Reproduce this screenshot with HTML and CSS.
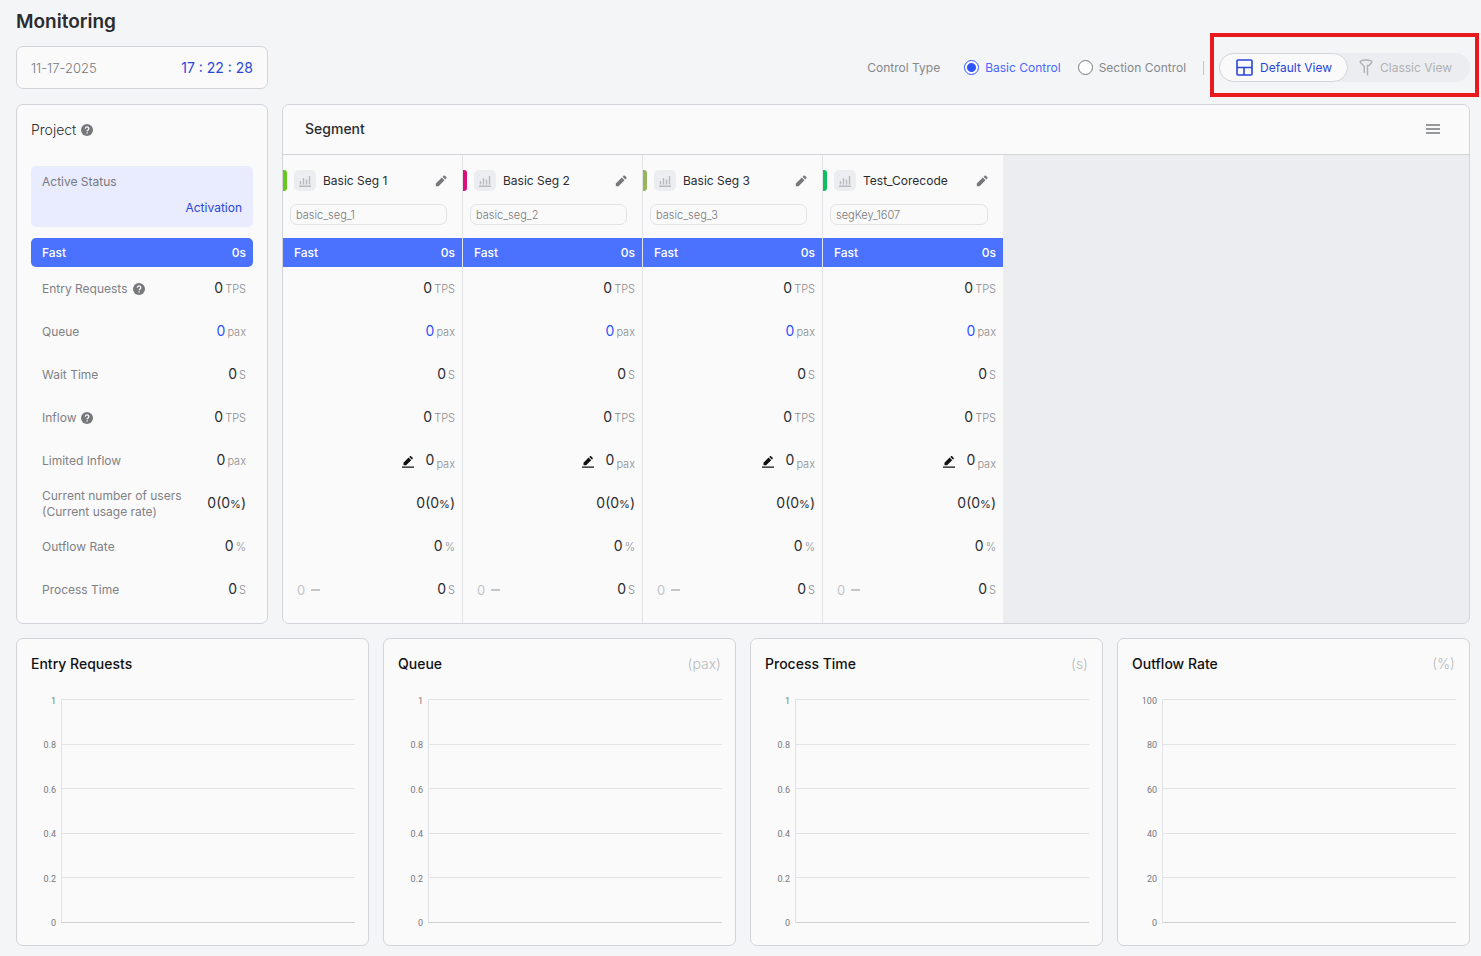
FILE: index.html
```html
<!DOCTYPE html>
<html lang="en">
<head>
    <meta charset="UTF-8">
    <meta name="viewport" content="width=device-width, initial-scale=1.0">
    <title>Monitoring</title>
    <link rel="stylesheet" href="styles.css">
</head>
<body>
    <svg class="sprite" aria-hidden="true">
        <symbol id="icon-help" viewBox="0 0 12 12">
            <circle cx="6" cy="6" r="6" fill="#77787b"/>
            <path d="M4.300 4.700a1.750 1.750 0 1 1 2.700 1.400c-.6.400-.9.700-.9 1.200" fill="none" stroke="#fff" stroke-width="1.200"/>
            <circle cx="6.100" cy="9" r=".75" fill="#fff"/>
        </symbol>
        <symbol id="icon-chart" viewBox="0 0 12 12">
            <path d="M1.500 9.500V6M4.500 9.500V3M7.500 9.500V4.500M10.500 9.500V1M0 11.200h12" fill="none" stroke="#b9babd" stroke-width="1.400"/>
        </symbol>
        <symbol id="icon-pencil" viewBox="0 0 12 12">
            <path d="M.8 8.500 6.800 2.500l2.700 2.700-6 6H.8zM7.600 1.700l1-1c.4-.4.9-.4 1.300 0l1.400 1.400c.4.4.4.9 0 1.300l-1 1z" fill="#77787b"/>
        </symbol>
        <symbol id="icon-edit" viewBox="0 0 12 12">
            <path d="M1.500 6.700 6.600 1.600l2.600 2.600L4.100 9.300H1.500zM7.300 1l.7-.7c.3-.3.8-.3 1.100 0l1.500 1.500c.3.3.3.8 0 1.100l-.7.7zM0 10.500h12v1.200H0z" fill="#111"/>
        </symbol>
    </svg>

    <h1 class="page-title">Monitoring</h1>

    <div class="toolbar">
        <div class="card clock">
            <span class="clock-date">11-17-2025</span>
            <span class="clock-time">17 : 22 : 28</span>
        </div>
        <fieldset class="control-type">
            <legend class="control-legend">Control Type</legend>
            <label class="radio"><input type="radio" name="control" value="basic" checked><span>Basic Control</span></label>
            <label class="radio"><input type="radio" name="control" value="section"><span>Section Control</span></label>
        </fieldset>
        <div class="view-switch">
            <button type="button" class="view-button active">
                <svg width="17" height="17" viewBox="0 0 17 17" fill="none" stroke="#2a46d8" stroke-width="1.600"><rect x="1" y="1" width="15" height="15" rx="1"/><path d="M1 8.500h15M8 8.500v7.500"/></svg>
                Default View
            </button>
            <button type="button" class="view-button">
                <svg width="14" height="17" viewBox="0 0 14 17" fill="none" stroke="#b0b1b5" stroke-width="1.400"><path d="M5.300 14V7.500L1.200 3.200C.9 1.800 3 1 7 1s6.100.8 5.800 2.200L10 6.500H8.500V16.500"/></svg>
                Classic View
            </button>
        </div>
    </div>

    <div class="overview">
        <section class="card project">
            <h2 class="project-title">Project <svg class="icon"><use href="#icon-help"/></svg></h2>
            <div class="status">
                <span>Active Status</span>
                <span class="status-value">Activation</span>
            </div>
            <div class="speed"><span>Fast</span><span>0s</span></div>
            <dl class="metrics">
                <div class="metric"><dt>Entry Requests <svg class="icon"><use href="#icon-help"/></svg></dt><dd>0<small>TPS</small></dd></div>
                <div class="metric"><dt>Queue</dt><dd class="queue">0<small>pax</small></dd></div>
                <div class="metric"><dt>Wait Time</dt><dd>0<small>S</small></dd></div>
                <div class="metric"><dt>Inflow <svg class="icon"><use href="#icon-help"/></svg></dt><dd>0<small>TPS</small></dd></div>
                <div class="metric"><dt>Limited Inflow</dt><dd>0<small>pax</small></dd></div>
                <div class="metric"><dt>Current number of users<br>(Current usage rate)</dt><dd>0(0<span class="percent">%</span>)</dd></div>
                <div class="metric"><dt>Outflow Rate</dt><dd>0<small>%</small></dd></div>
                <div class="metric"><dt>Process Time</dt><dd>0<small>S</small></dd></div>
            </dl>
        </section>

        <section class="card segments">
            <header class="segments-header">
                <h2>Segment</h2>
                <button type="button" class="icon-button" aria-label="Menu">
                    <svg width="14" height="10" viewBox="0 0 14 10" stroke="#77787b" stroke-width="1.300"><path d="M0 1h14M0 5h14M0 9h14"/></svg>
                </button>
            </header>
            <div class="segment-list">
                <article class="segment">
                    <div class="segment-head">
                        <span class="segment-color green"></span>
                        <button type="button" class="chart-button" aria-label="Chart"><svg class="icon"><use href="#icon-chart"/></svg></button>
                        <h3>Basic Seg 1</h3>
                        <button type="button" class="icon-button" aria-label="Edit"><svg class="icon"><use href="#icon-pencil"/></svg></button>
                    </div>
                    <div class="segment-key">basic_seg_1</div>
                    <div class="speed"><span>Fast</span><span>0s</span></div>
                    <ul class="metrics">
                        <li class="metric"><span class="value">0<small>TPS</small></span></li>
                        <li class="metric"><span class="value queue">0<small>pax</small></span></li>
                        <li class="metric"><span class="value">0<small>S</small></span></li>
                        <li class="metric"><span class="value">0<small>TPS</small></span></li>
                        <li class="metric limit"><button type="button" class="icon-button" aria-label="Edit limit"><svg class="icon"><use href="#icon-edit"/></svg></button><span class="value">0<small>pax</small></span></li>
                        <li class="metric"><span class="value">0(0<span class="percent">%</span>)</span></li>
                        <li class="metric"><span class="value">0<small>%</small></span></li>
                        <li class="metric"><span class="trend">0</span><span class="value">0<small>S</small></span></li>
                    </ul>
                </article>
                <article class="segment">
                    <div class="segment-head">
                        <span class="segment-color pink"></span>
                        <button type="button" class="chart-button" aria-label="Chart"><svg class="icon"><use href="#icon-chart"/></svg></button>
                        <h3>Basic Seg 2</h3>
                        <button type="button" class="icon-button" aria-label="Edit"><svg class="icon"><use href="#icon-pencil"/></svg></button>
                    </div>
                    <div class="segment-key">basic_seg_2</div>
                    <div class="speed"><span>Fast</span><span>0s</span></div>
                    <ul class="metrics">
                        <li class="metric"><span class="value">0<small>TPS</small></span></li>
                        <li class="metric"><span class="value queue">0<small>pax</small></span></li>
                        <li class="metric"><span class="value">0<small>S</small></span></li>
                        <li class="metric"><span class="value">0<small>TPS</small></span></li>
                        <li class="metric limit"><button type="button" class="icon-button" aria-label="Edit limit"><svg class="icon"><use href="#icon-edit"/></svg></button><span class="value">0<small>pax</small></span></li>
                        <li class="metric"><span class="value">0(0<span class="percent">%</span>)</span></li>
                        <li class="metric"><span class="value">0<small>%</small></span></li>
                        <li class="metric"><span class="trend">0</span><span class="value">0<small>S</small></span></li>
                    </ul>
                </article>
                <article class="segment">
                    <div class="segment-head">
                        <span class="segment-color olive"></span>
                        <button type="button" class="chart-button" aria-label="Chart"><svg class="icon"><use href="#icon-chart"/></svg></button>
                        <h3>Basic Seg 3</h3>
                        <button type="button" class="icon-button" aria-label="Edit"><svg class="icon"><use href="#icon-pencil"/></svg></button>
                    </div>
                    <div class="segment-key">basic_seg_3</div>
                    <div class="speed"><span>Fast</span><span>0s</span></div>
                    <ul class="metrics">
                        <li class="metric"><span class="value">0<small>TPS</small></span></li>
                        <li class="metric"><span class="value queue">0<small>pax</small></span></li>
                        <li class="metric"><span class="value">0<small>S</small></span></li>
                        <li class="metric"><span class="value">0<small>TPS</small></span></li>
                        <li class="metric limit"><button type="button" class="icon-button" aria-label="Edit limit"><svg class="icon"><use href="#icon-edit"/></svg></button><span class="value">0<small>pax</small></span></li>
                        <li class="metric"><span class="value">0(0<span class="percent">%</span>)</span></li>
                        <li class="metric"><span class="value">0<small>%</small></span></li>
                        <li class="metric"><span class="trend">0</span><span class="value">0<small>S</small></span></li>
                    </ul>
                </article>
                <article class="segment">
                    <div class="segment-head">
                        <span class="segment-color emerald"></span>
                        <button type="button" class="chart-button" aria-label="Chart"><svg class="icon"><use href="#icon-chart"/></svg></button>
                        <h3>Test_Corecode</h3>
                        <button type="button" class="icon-button" aria-label="Edit"><svg class="icon"><use href="#icon-pencil"/></svg></button>
                    </div>
                    <div class="segment-key">segKey_1607</div>
                    <div class="speed"><span>Fast</span><span>0s</span></div>
                    <ul class="metrics">
                        <li class="metric"><span class="value">0<small>TPS</small></span></li>
                        <li class="metric"><span class="value queue">0<small>pax</small></span></li>
                        <li class="metric"><span class="value">0<small>S</small></span></li>
                        <li class="metric"><span class="value">0<small>TPS</small></span></li>
                        <li class="metric limit"><button type="button" class="icon-button" aria-label="Edit limit"><svg class="icon"><use href="#icon-edit"/></svg></button><span class="value">0<small>pax</small></span></li>
                        <li class="metric"><span class="value">0(0<span class="percent">%</span>)</span></li>
                        <li class="metric"><span class="value">0<small>%</small></span></li>
                        <li class="metric"><span class="trend">0</span><span class="value">0<small>S</small></span></li>
                    </ul>
                </article>
            </div>
        </section>
    </div>

    <div class="charts">
        <section class="card chart">
            <header class="chart-header"><h2>Entry Requests</h2></header>
            <div class="chart-body">
                <div class="axis"><span>1</span><span>0.8</span><span>0.6</span><span>0.4</span><span>0.2</span><span>0</span></div>
                <div class="plot"><i></i><i></i><i></i><i></i><i></i></div>
            </div>
        </section>
        <section class="card chart">
            <header class="chart-header"><h2>Queue</h2><span class="unit">(pax)</span></header>
            <div class="chart-body">
                <div class="axis"><span>1</span><span>0.8</span><span>0.6</span><span>0.4</span><span>0.2</span><span>0</span></div>
                <div class="plot"><i></i><i></i><i></i><i></i><i></i></div>
            </div>
        </section>
        <section class="card chart">
            <header class="chart-header"><h2>Process Time</h2><span class="unit">(s)</span></header>
            <div class="chart-body">
                <div class="axis"><span>1</span><span>0.8</span><span>0.6</span><span>0.4</span><span>0.2</span><span>0</span></div>
                <div class="plot"><i></i><i></i><i></i><i></i><i></i></div>
            </div>
        </section>
        <section class="card chart">
            <header class="chart-header"><h2>Outflow Rate</h2><span class="unit">(%)</span></header>
            <div class="chart-body">
                <div class="axis"><span>100</span><span>80</span><span>60</span><span>40</span><span>20</span><span>0</span></div>
                <div class="plot"><i></i><i></i><i></i><i></i><i></i></div>
            </div>
        </section>
    </div>
</body>
</html>
```

FILE: styles.css
```css
* {
    box-sizing: border-box;
}

body {
    margin: 0;
    padding: 9px 11px 10px 16px;
    background-color: #f4f5f7;
    color: #2b2c2f;
    font-family: Inter, "Noto Sans", sans-serif;
    font-size: 12px;
    line-height: 16px;
}

h1, h2, h3, dl, dd, ul {
    margin: 0;
    padding: 0;
    font-weight: 400;
}

ul {
    list-style: none;
}

button {
    padding: 0;
    border: none;
    background: none;
    font: inherit;
    cursor: pointer;
}

svg {
    display: block;
}

.sprite {
    display: none;
}

.icon {
    width: 12px;
    height: 12px;
    flex: none;
}

.card {
    background-color: #fafafb;
    border: 1px solid #d3d4d9;
    border-radius: 7px;
}

.page-title {
    font-size: 19px;
    font-weight: 600;
    line-height: 26px;
}

/* Toolbar */
.toolbar {
    display: flex;
    align-items: center;
    margin-top: 11px;
}

.clock {
    display: flex;
    justify-content: space-between;
    align-items: center;
    width: 252px;
    height: 43px;
    padding: 0 14px;
}

.clock-date {
    color: #77787b;
    font-size: 13px;
    font-weight: 300;
}

.clock-time {
    color: #2a46d8;
    font-size: 14px;
}

.control-type {
    display: flex;
    align-items: center;
    gap: 17px;
    margin: 0 16px 0 auto;
    padding: 0 16px 0 0;
    border: none;
}

.control-type::after {
    content: "";
    width: 1px;
    height: 14px;
    margin-right: -17px;
    background-color: #c4c5c9;
}

.control-legend {
    float: left;
    margin-right: 7px;
    padding: 0;
    color: #87888b;
}

.radio {
    display: flex;
    align-items: center;
    gap: 6px;
    color: #87888b;
}

.radio input {
    appearance: none;
    width: 15px;
    height: 15px;
    margin: 0;
    border: 1px solid #77787b;
    border-radius: 50%;
    background-color: #fff;
}

.radio input:checked {
    border-color: #2f54ff;
    background: radial-gradient(circle, #2f54ff 4px, #fff 5px);
}

.radio input:checked + span {
    color: #4a66ff;
}

.view-switch {
    position: relative;
    display: flex;
    border-radius: 15px;
    background-color: #ecedf0;
}

/* Highlight frame around the switch */
.view-switch::after {
    content: "";
    position: absolute;
    inset: -20px -9px -15px;
    border: 4px solid #e81a1e;
    pointer-events: none;
}

.view-button {
    display: flex;
    align-items: center;
    gap: 7px;
    height: 29px;
    padding: 0 18px 0 11px;
    color: #b0b1b5;
}

.view-button.active {
    padding: 0 15px 0 16px;
    border: 1px solid #d3d4d9;
    border-radius: 15px;
    background-color: #fafafb;
    color: #2a46d8;
}

/* Project and segments */
.overview {
    display: grid;
    grid-template-columns: 252px 1fr;
    gap: 14px;
    margin-top: 15px;
}

.project {
    padding: 0 14px;
}

.project-title {
    display: flex;
    align-items: center;
    gap: 5px;
    height: 50px;
    font-size: 14px;
    font-weight: 300;
}

.status {
    display: flex;
    flex-direction: column;
    justify-content: space-between;
    height: 61px;
    margin: 11px 0;
    padding: 8px 11px 11px;
    border-radius: 5px;
    background-color: #e9ecff;
    color: #77787b;
}

.status-value {
    align-self: flex-end;
    color: #2a46d8;
}

.speed {
    display: flex;
    justify-content: space-between;
    align-items: center;
    height: 29px;
    padding: 0 7px 0 11px;
    background-color: #4a72ff;
    color: #fff;
    font-weight: 500;
}

.project .speed {
    border-radius: 5px;
}

.metrics {
    padding: 0 7px 12px 11px;
}

.metric {
    display: flex;
    justify-content: flex-end;
    align-items: center;
    height: 43px;
}

.metric dt {
    display: flex;
    align-items: center;
    gap: 5px;
    margin-right: auto;
    color: #808184;
}

.metric dd, .value {
    color: #2b2c2f;
    font-size: 14px;
}

.metric small {
    margin-left: 2px;
    color: #8c8d90;
    font-size: 11px;
    font-weight: 300;
}

.metric .queue {
    color: #2f54ff;
}

.percent {
    font-size: 11px;
}

.limit {
    padding-top: 3px;
}

.limit .icon-button {
    margin-right: 12px;
}

.limit small {
    vertical-align: -3px;
}

.trend {
    display: flex;
    align-items: center;
    gap: 6px;
    margin: 0 auto 0 3px;
    color: #c4c5c9;
    font-size: 13px;
}

.trend::after {
    content: "";
    width: 9px;
    height: 2px;
    background-color: #c4c5c9;
}

.segments {
    display: flex;
    flex-direction: column;
    overflow: hidden;
    background-color: #ecedf0;
}

.segments-header {
    display: flex;
    justify-content: space-between;
    align-items: center;
    height: 50px;
    padding: 0 29px 1px 22px;
    border-bottom: 1px solid #d3d4d9;
    background-color: #fafafb;
}

.segments-header h2, .chart-header h2 {
    font-size: 14px;
    font-weight: 500;
}

.segment-list {
    display: flex;
    flex: 1;
}

.segment {
    width: 180px;
    border-right: 1px solid #e2e3e6;
    background-color: #fafafb;
}

.segment:last-child {
    border-right: none;
}

.segment-head {
    display: flex;
    align-items: center;
    gap: 7px;
    height: 21px;
    margin-top: 15px;
    padding-right: 15px;
}

.segment-head .icon-button {
    margin-left: auto;
}

.segment-head h3 {
    font-size: 12px;
}

.segment-color {
    width: 4px;
    height: 21px;
    border-radius: 0 3px 3px 0;
}

.green {
    background-color: #66c81e;
}

.pink {
    background-color: #d8107c;
}

.olive {
    background-color: #97b55c;
}

.emerald {
    background-color: #0fbf5f;
}

.chart-button {
    display: flex;
    justify-content: center;
    align-items: center;
    width: 22px;
    height: 21px;
    border-radius: 5px;
    background-color: #ecedf0;
}

.segment-key {
    height: 21px;
    margin: 13px 15px 13px 7px;
    padding: 2px 5px;
    border: 1px solid #e2e3e6;
    border-radius: 7px;
    color: #77787b;
    font-size: 11px;
    font-weight: 300;
}

/* Charts */
.charts {
    display: grid;
    grid-template-columns: repeat(4, 1fr);
    gap: 14px;
    margin-top: 14px;
}

.chart {
    padding: 0 13px 22px 14px;
}

.chart-header {
    display: flex;
    justify-content: space-between;
    align-items: center;
    height: 50px;
}

.chart-header h2 {
    color: #111;
}

.unit {
    margin-right: 1px;
    color: #b9babd;
    font-size: 14px;
    font-weight: 300;
}

.chart-body {
    display: flex;
    gap: 5px;
    margin-top: 10px;
}

.axis {
    display: flex;
    flex-direction: column;
    justify-content: space-between;
    width: 25px;
    margin: -3px 0 -5px;
    color: #77787b;
    font-family: Roboto, sans-serif;
    font-size: 9px;
    line-height: 10px;
    text-align: right;
}

.plot {
    display: flex;
    flex: 1;
    flex-direction: column;
    height: 224px;
    border-left: 1px solid #e2e3e6;
    border-bottom: 1px solid #cfd0d3;
}

.plot i {
    flex: 1;
    border-top: 1px solid #e2e3e6;
}
```
